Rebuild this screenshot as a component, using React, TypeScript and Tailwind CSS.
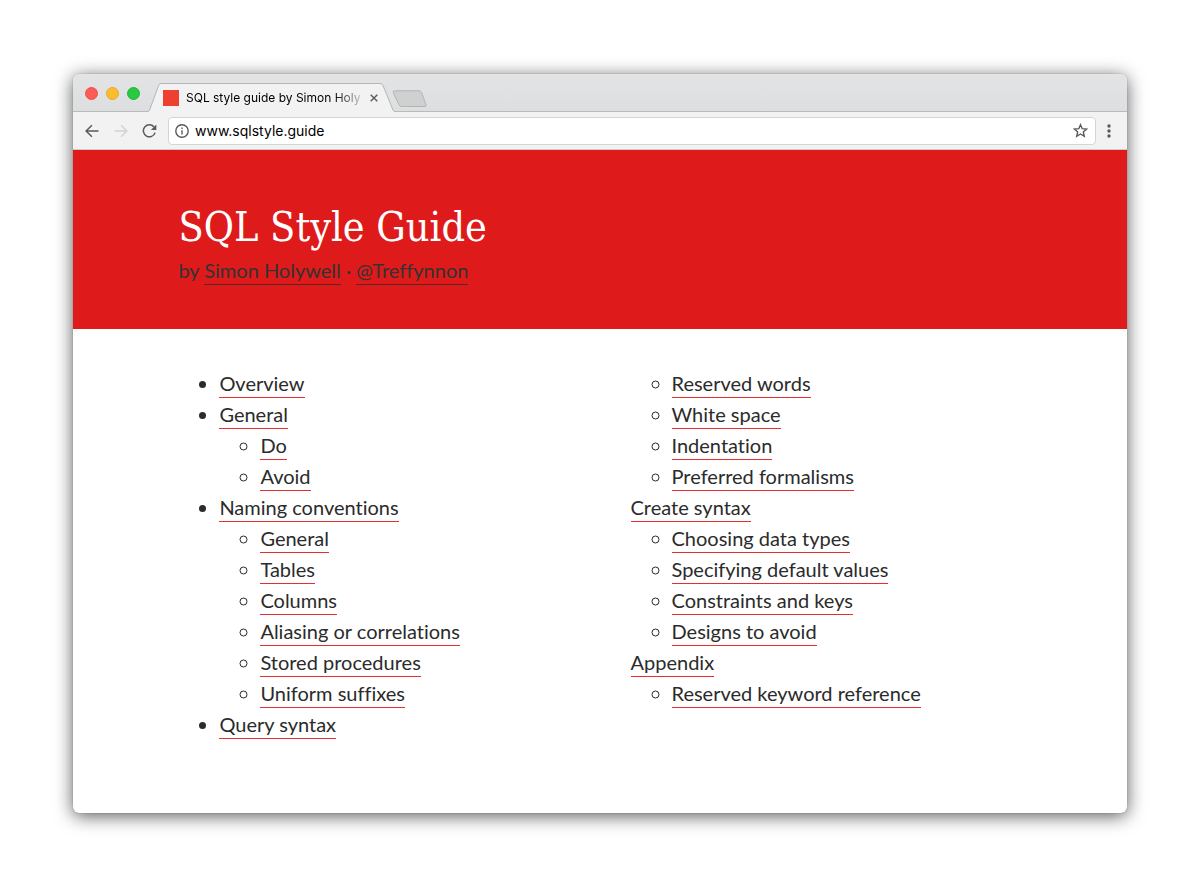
import React from "react";

type Entry = { title: string; unmarked?: boolean; children?: string[] };

const contents: Entry[] = [
  { title: "Overview" },
  { title: "General", children: ["Do", "Avoid"] },
  {
    title: "Naming conventions",
    children: [
      "General",
      "Tables",
      "Columns",
      "Aliasing or correlations",
      "Stored procedures",
      "Uniform suffixes",
    ],
  },
  {
    title: "Query syntax",
    children: ["Reserved words", "White space", "Indentation", "Preferred formalisms"],
  },
  {
    title: "Create syntax",
    unmarked: true,
    children: [
      "Choosing data types",
      "Specifying default values",
      "Constraints and keys",
      "Designs to avoid",
    ],
  },
  { title: "Appendix", unmarked: true, children: ["Reserved keyword reference"] },
];

const slug = (text: string) => "#" + text.toLowerCase().replace(/\s+/g, "-");

function TabStrip() {
  return (
    <div className="flex h-[38px] items-end bg-gradient-to-b from-[#e2e4e5] to-[#dcdedf] shadow-[inset_0_-1px_0_#b9babb]">
      <div className="flex gap-2 self-center pl-3">
        <button aria-label="Close window" className="size-[13px] rounded-full border border-[#e8524b] bg-[#fc5b57]" />
        <button aria-label="Minimise window" className="size-[13px] rounded-full border border-[#e5a92c] bg-[#fdbc2e]" />
        <button aria-label="Zoom window" className="size-[13px] rounded-full border border-[#24b43a] bg-[#28ca41]" />
      </div>
      <div className="ml-[7px] flex h-[29px]">
        <svg width="14" height="29" viewBox="0 0 14 29" aria-hidden="true">
          <path d="M0 29 L1 28.500 Q2 28.300 2.600 27 L11.600 2.500 Q12.300 .5 14 .5 V29 Z" fill="#f2f2f2" />
          <path d="M0 28.500 H.5 Q2 28.300 2.600 27 L11.600 2.500 Q12.300 .5 14 .5" fill="none" stroke="#b4b5b6" />
        </svg>
        <div className="flex items-center border-t border-[#b4b5b6] bg-[#f2f2f2]">
          <span className="ml-[2px] size-4 bg-[#ee4030]" />
          <span className="ml-[7px] w-[178px] bg-gradient-to-r from-black from-80% to-[#e0e0e0] bg-clip-text font-[Inter,sans-serif] text-[12px] leading-4 whitespace-nowrap text-transparent">
            SQL style guide by Simon Holy
          </span>
          <button aria-label="Close tab" className="ml-[6px]">
            <svg width="8" height="8" viewBox="0 0 8 8" aria-hidden="true">
              <path d="M.7 .7 L7.300 7.300 M7.300 .7 L.7 7.300" stroke="#5a5a5a" strokeWidth="1.400" />
            </svg>
          </button>
        </div>
        <svg width="18" height="29" viewBox="0 0 18 29" aria-hidden="true">
          <path d="M0 .5 H2 Q4.300 .5 5 2.500 L15 27 Q15.700 28.500 17 28.500 L18 29 H0 Z" fill="#f2f2f2" />
          <path d="M0 .5 H2 Q4.300 .5 5 2.500 L15 27 Q15.700 28.500 17 28.500 H18" fill="none" stroke="#b4b5b6" />
        </svg>
      </div>
      <button aria-label="New tab" className="-ml-1 self-center pt-3">
        <svg width="35" height="18" viewBox="0 0 35 18" aria-hidden="true">
          <path
            d="M2.500 .8 H27 Q28.800 .8 29.500 2.300 L34 14.700 Q34.600 16.500 33 16.500 H9.500 Q7.800 16.500 7 14.800 L1.300 2.600 Q.6 .8 2.500 .8 Z"
            fill="#cfd0d0"
            stroke="#b2b3b3"
          />
        </svg>
      </button>
    </div>
  );
}

function Toolbar() {
  return (
    <div className="flex h-[38px] items-center border-b border-[#c9cccc] bg-[#f2f2f2] pr-4 pl-3">
      <button aria-label="Back">
        <svg width="14" height="14" viewBox="0 0 14 14" fill="none" stroke="#5a5a5a" strokeWidth="1.500" aria-hidden="true">
          <path d="M13.500 7 H1.500 M6.900 1.200 L1.100 7 L6.900 12.800" />
        </svg>
      </button>
      <button aria-label="Forward" className="ml-[15px]" disabled>
        <svg width="14" height="14" viewBox="0 0 14 14" fill="none" stroke="#d2d2d2" strokeWidth="1.500" aria-hidden="true">
          <path d="M.5 7 H12.500 M7.100 1.200 L12.900 7 L7.100 12.800" />
        </svg>
      </button>
      <button aria-label="Reload" className="ml-[14px]">
        <svg width="15" height="14" viewBox="0 0 15 14" aria-hidden="true">
          <path d="M12 3 A6 6 0 1 0 13.100 8.600" fill="none" stroke="#5a5a5a" strokeWidth="1.500" />
          <path d="M14.300 .6 V6 H8.900 Z" fill="#5a5a5a" />
        </svg>
      </button>
      <label className="ml-[11px] flex h-7 flex-1 items-center rounded-[4px] border border-[#d5d5d5] bg-white pr-[7px] pl-[6px]">
        <svg width="14" height="14" viewBox="0 0 14 14" aria-hidden="true">
          <circle cx="7" cy="7" r="6.200" fill="none" stroke="#5a5a5a" strokeWidth="1.400" />
          <path d="M6.300 6.200 H7.700 V10.400 H6.300 Z M6.300 3.600 H7.700 V5 H6.300 Z" fill="#5a5a5a" />
        </svg>
        <input
          aria-label="Address"
          defaultValue="www.sqlstyle.guide"
          className="ml-[6px] min-w-0 flex-1 bg-transparent font-[Inter,sans-serif] text-[14px] leading-5 text-black outline-none"
        />
        <svg width="15" height="15" viewBox="0 0 15 15" aria-hidden="true">
          <path
            d="M7.500 1.700 L9.200 5.700 L13.600 6.100 L10.300 9 L11.300 13.300 L7.500 11 L3.700 13.300 L4.700 9 L1.400 6.100 L5.800 5.700 Z"
            fill="none"
            stroke="#5a5a5a"
            strokeWidth="1.400"
          />
        </svg>
      </label>
      <button aria-label="Menu" className="ml-[11px]">
        <svg width="4" height="14" viewBox="0 0 4 14" fill="#5a5a5a" aria-hidden="true">
          <circle cx="2" cy="2" r="1.700" />
          <circle cx="2" cy="7" r="1.700" />
          <circle cx="2" cy="12" r="1.700" />
        </svg>
      </button>
    </div>
  );
}

function TocLink({ title }: { title: string }) {
  return (
    <a href={slug(title)} className="border-b border-[#e62e2e] pb-[2px]">
      {title}
    </a>
  );
}

export default function App() {
  return (
    <div className="min-h-screen bg-white px-[73px] py-[74px]">
      <div className="overflow-hidden rounded-[6px] bg-white shadow-[0_0_1px_rgba(0,0,0,0.5),0_3px_18px_rgba(0,0,0,0.65)]">
        <TabStrip />
        <Toolbar />
        <header className="bg-[#df1a1a] px-[10%] pt-[52px] pb-[43px] text-[#333]">
          <h1 className="font-['DejaVu_Serif_Condensed','DejaVu_Serif',serif] text-[41px] leading-[50px] text-white">
            SQL Style Guide
          </h1>
          <p className="mt-[3px] font-[Lato,sans-serif] text-[20px] leading-[31px] [font-variant-ligatures:none]">
            by{" "}
            <a href="#author" className="border-b border-[#5c2626] pb-[2px]">
              Simon Holywell
            </a>{" "}
            ·{" "}
            <a href="#twitter" className="border-b border-[#5c2626] pb-[2px]">
              @Treffynnon
            </a>
          </p>
        </header>
        <main className="px-[10%] pt-[39px] pb-[73px]">
          <nav
            aria-label="Contents"
            className="pl-[41px] font-[Lato,sans-serif] text-[20px] leading-[31px] text-[#2b2b2b] [font-variant-ligatures:none]"
          >
            <ul className="list-disc columns-2 gap-5">
              {contents.map((entry) => (
                <li key={entry.title} className={entry.unmarked ? "list-none" : ""}>
                  <TocLink title={entry.title} />
                  {entry.children && (
                    <ul className="list-[circle] pl-[41px]">
                      {entry.children.map((child) => (
                        <li key={child}>
                          <TocLink title={child} />
                        </li>
                      ))}
                    </ul>
                  )}
                </li>
              ))}
            </ul>
          </nav>
        </main>
      </div>
    </div>
  );
}
